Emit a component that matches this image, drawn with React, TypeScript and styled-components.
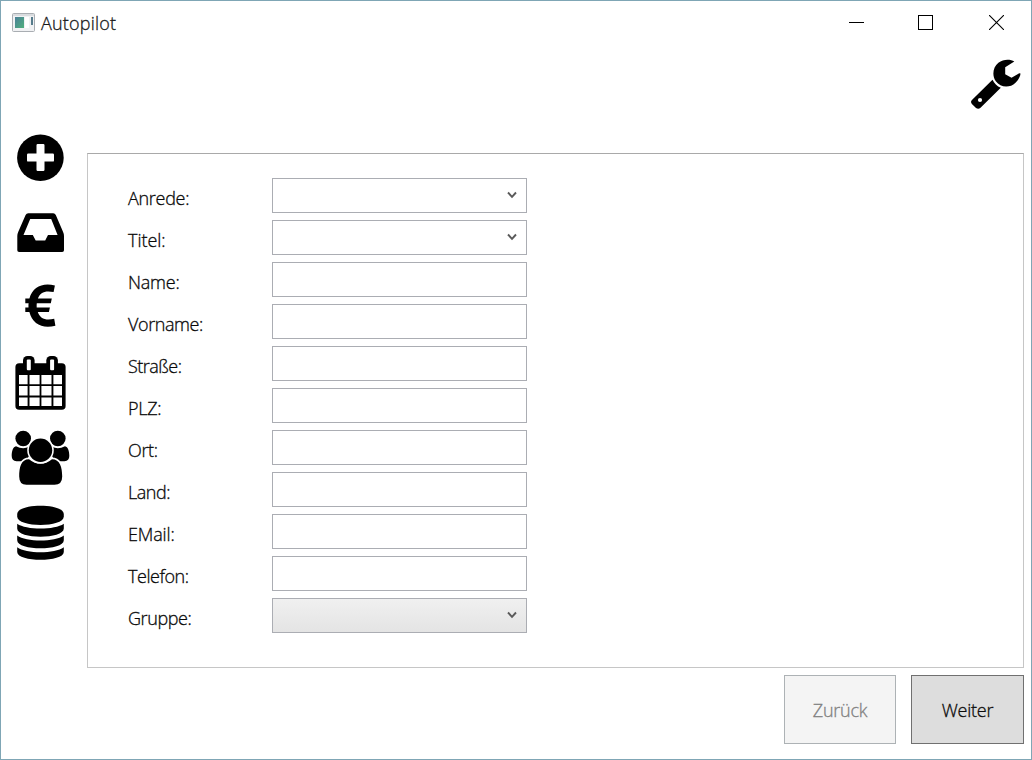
import React from "react";
import styled, { createGlobalStyle } from "styled-components";

const GlobalStyle = createGlobalStyle`
  * { box-sizing: border-box; }
  body { margin: 0; background: #fff; }
`;

const Window = styled.div`
  width: 1032px;
  height: 760px;
  display: flex;
  flex-direction: column;
  overflow: hidden;
  background: #fff;
  border: 1px solid #7fa6b5;
  color: #080808;
  font-family: "Open Sans", "Noto Sans", sans-serif;
  font-size: 18px;
  font-weight: 300;
  -webkit-text-stroke-width: 0.3px;
`;

const TitleBar = styled.header`
  display: flex;
  align-items: center;
  height: 42px;
  padding-left: 11px;
`;

const Title = styled.h1<{ $spacing: number }>`
  flex: 1;
  margin: 1px 0 0 6px;
  font-size: 18px;
  font-weight: 300;
  line-height: 24px;
  color: #181818;
  letter-spacing: ${(p) => p.$spacing}px;
`;

const Caption = styled.div`
  display: flex;
  gap: 54px;
  padding-right: 27px;

  & > :last-child {
    margin-left: 2px;
  }
`;

const Toolbar = styled.div`
  display: flex;
  justify-content: flex-end;
  height: 110px;
  padding: 15px 9px 0 0;
`;

const Body = styled.div`
  display: flex;
  height: 515px;
`;

const Rail = styled.nav`
  width: 86px;
  height: 435px;
  margin-top: -24px;
  padding-left: 9px;
  display: flex;
  flex-direction: column;
`;

const Panel = styled.main`
  width: 937px;
  padding: 24px 0 0 40px;
  border: 1px solid #c6c6c6;
  border-top-color: #a9a9a9;
  display: flex;
  flex-direction: column;
  gap: 7px;
`;

const Row = styled.div`
  display: flex;
  height: 35px;
`;

const Label = styled.label<{ $spacing: number }>`
  width: 144px;
  padding-top: 8px;
  line-height: 24px;
  letter-spacing: ${(p) => p.$spacing}px;
`;

const Field = styled.div<{ $filled?: boolean }>`
  width: 255px;
  height: 35px;
  padding: 12px 9px 0 0;
  display: flex;
  justify-content: flex-end;
  border: 1px solid #abadb3;
  background: ${(p) => (p.$filled ? "linear-gradient(#f0f0f0, #e4e4e4)" : "#fff")};
`;

const Footer = styled.footer`
  display: flex;
  justify-content: flex-end;
  gap: 15px;
  padding: 7px 7px 0 0;
`;

const Button = styled.button<{ $width: number; $spacing: number }>`
  width: ${(p) => p.$width}px;
  height: 69px;
  padding: 1px 0 0;
  font: inherit;
  letter-spacing: ${(p) => p.$spacing}px;
  color: #0c0c0c;
  background: #ddd;
  border: 1px solid #707070;
  border-radius: 0;
  &:disabled {
    color: #808080;
    background: #f4f4f4;
    border-color: #adb2b5;
  }
`;

const AppIcon = () => (
  <svg width="23" height="19" viewBox="0 0 23 19">
    <defs>
      <linearGradient id="screen" x1="0" y1="0" x2="1" y2="1">
        <stop offset="0" stopColor="#4a7f98" />
        <stop offset="1" stopColor="#4fb07c" />
      </linearGradient>
    </defs>
    <rect x="0.5" y="0.5" width="22" height="18" rx="1" fill="#f0f1f3" stroke="#a9adb2" />
    <rect x="1" y="1" width="21" height="2" fill="#d9dcdf" />
    <rect x="3" y="4" width="9" height="11" fill="url(#screen)" />
    <rect x="13" y="4" width="4" height="11" fill="#fff" />
    <rect x="19" y="4" width="2" height="8" fill="#557b8b" />
  </svg>
);

const Minimize = () => (
  <svg width="15" height="15"><path d="M0 7.5H15" stroke="#000" /></svg>
);
const Maximize = () => (
  <svg width="15" height="15"><rect x=".5" y=".5" width="14" height="14" fill="none" stroke="#000" /></svg>
);
const Close = () => (
  <svg width="15" height="15"><path d="M0 0L15 15M15 0L0 15" stroke="#000" strokeWidth="1.1" /></svg>
);

const Wrench = () => (
  <svg width="52" height="54" viewBox="970 58 52 54">
    <path d="M1014.3 61.4C1010.5 59.2 1003.5 58.7 998.4 62.8C992.8 67.3 991.8 75.5 995.8 81.3C1000.6 87.7 1009.8 88.3 1015.5 82.7C1018.8 79.6 1020.4 76 1020.5 73.5L1019.2 73.3L1011.5 77.8L1005.2 74.2V67.2Z" />
    <path d="M992.5 79.7C994.2 83.4 997 86.2 1000.8 87.7L980.5 107.7Q978.4 109.7 976 108L971.9 104Q970 101.8 972.2 99.8Z" />
    <circle cx="980" cy="100" r="2.1" fill="#fff" />
  </svg>
);

const RailIcons = () => (
  <svg width="62" height="435" viewBox="10 129 62 435">
    <circle cx="40.4" cy="157.7" r="23.3" />
    <path d="M37.7 144H43.3Q44.5 144 44.5 145.2V153.6H52.8Q54 153.6 54 154.8V160.4Q54 161.6 52.8 161.6H44.5V169.8Q44.5 171 43.3 171H37.7Q36.5 171 36.5 169.8V161.6H28.2Q27 161.6 27 160.4V154.8Q27 153.6 28.2 153.6H36.5V145.2Q36.5 144 37.7 144Z" fill="#fff" />

    <path fillRule="evenodd" d="M28.3 213.3H53.2Q55 213.3 55.8 215L63 231.8Q64 234 64 236V250.2Q64 252 62.2 252H19.1Q17.3 252 17.3 250.2V236Q17.3 234 18.3 231.8L25.6 215Q26.4 213.3 28.3 213.3ZM30.2 219L23.5 234.9H32.8L35.7 240.4H45.2L48 234.9H57.6L51.2 219Z" />

    <path d="M54.9 285.5L53.6 292C45.2 290.2 40 292.3 37.9 298.5H51.8L50.8 303.3H36.8Q36.5 305.5 36.7 307.5H49.9L48.9 312H37.8C40 318.6 45.6 321 54.2 318.8L55.4 325.7C42.6 329.2 32.2 324 29.4 312H25.3V307.5H28.5Q28.3 305.4 28.6 303.3H25.3V298.5H29.4C32.6 287 42.6 282.2 54.9 285.5Z" />

    <rect x="15.4" y="363.3" width="50.2" height="46.4" rx="3.8" />
    <rect x="23" y="356" width="11.6" height="18" rx="4.5" />
    <rect x="46.3" y="356" width="11.6" height="18" rx="4.5" />
    <path fill="#fff" d="M19 375H27.6V384.2H19ZM29.5 375H39.6V384.2H29.5ZM41.4 375H51.5V384.2H41.4ZM53.4 375H62V384.2H53.4ZM19 386H27.6V395.5H19ZM29.5 386H39.6V395.5H29.5ZM41.4 386H51.5V395.5H41.4ZM53.4 386H62V395.5H53.4ZM19 397.4H27.6V406H19ZM29.5 397.4H39.6V406H29.5ZM41.4 397.4H51.5V406H41.4ZM53.4 397.4H62V406H53.4Z" />
    <rect x="26.8" y="359.6" width="4" height="10.6" rx="1" fill="#fff" />
    <rect x="50.1" y="359.6" width="4" height="10.6" rx="1" fill="#fff" />

    <circle cx="23.2" cy="438.5" r="7.8" />
    <circle cx="57.8" cy="438.5" r="7.8" />
    <path d="M16 446.3Q23 450 29 446.8V456L26 461.3H16.5Q11.7 461 11.7 456C11.7 451.5 13 446.8 16 446.3Z" />
    <path d="M65 446.3Q58 450 52 446.8V456L55 461.3H64.5Q69.3 461 69.3 456C69.3 451.5 68 446.8 65 446.3Z" />
    <path stroke="#fff" strokeWidth="3.2" paintOrder="stroke" d="M29 459.2Q40.5 468.5 52 459.2C60 459.2 62.2 467.5 62.2 476.5Q62.2 484.8 54.5 484.8H26.5Q19.2 484.8 19.2 476.5C19.2 467.5 21 459.2 29 459.2Z" />
    <circle cx="40.5" cy="450.3" r="11.7" stroke="#fff" strokeWidth="3.2" paintOrder="stroke" />

    <path d="M17.2 514C17.2 502.9 63.8 502.9 63.8 514V516.5C63.8 527.8 17.2 527.8 17.2 516.5Z" />
    <path d="M17.2 523.8C26 530.2 55 530.2 63.8 523.8V528.5C63.8 539.4 17.2 539.4 17.2 528.5Z" />
    <path d="M17.2 535.5C26 542.2 55 542.2 63.8 535.5V540.2C63.8 551 17.2 551 17.2 540.2Z" />
    <path d="M17.2 547.2C26 553.9 55 553.9 63.8 547.2V552C63.8 562.4 17.2 562.4 17.2 552Z" />
  </svg>
);

const Chevron = () => (
  <svg width="10" height="9"><path d="M1 1.5L5 5.8L9 1.5" fill="none" stroke="#5a5a5a" strokeWidth="1.9" /></svg>
);

type Kind = "select" | "text" | "disabled";
const rows: [string, Kind, number][] = [
  ["Anrede:", "select", -0.3],
  ["Titel:", "select", -0.05],
  ["Name:", "text", -0.2],
  ["Vorname:", "text", -0.4],
  ["Straße:", "text", -0.52],
  ["PLZ:", "text", -0.25],
  ["Ort:", "text", -0.35],
  ["Land:", "text", -0.45],
  ["EMail:", "text", -0.15],
  ["Telefon:", "text", -0.45],
  ["Gruppe:", "disabled", -0.42],
];

export default function App() {
  return (
    <>
      <GlobalStyle />
      <Window>
        <TitleBar>
          <AppIcon />
          <Title $spacing={0.2}>Autopilot</Title>
          <Caption>
            <Minimize />
            <Maximize />
            <Close />
          </Caption>
        </TitleBar>
        <Toolbar>
          <Wrench />
        </Toolbar>
        <Body>
          <Rail>
            <RailIcons />
          </Rail>
          <Panel>
            {rows.map(([label, kind, spacing]) => (
              <Row key={label}>
                <Label $spacing={spacing}>{label}</Label>
                <Field $filled={kind === "disabled"}>{kind !== "text" && <Chevron />}</Field>
              </Row>
            ))}
          </Panel>
        </Body>
        <Footer>
          <Button disabled $width={112} $spacing={-0.25}>Zurück</Button>
          <Button $width={113} $spacing={-0.25}>Weiter</Button>
        </Footer>
      </Window>
    </>
  );
}
